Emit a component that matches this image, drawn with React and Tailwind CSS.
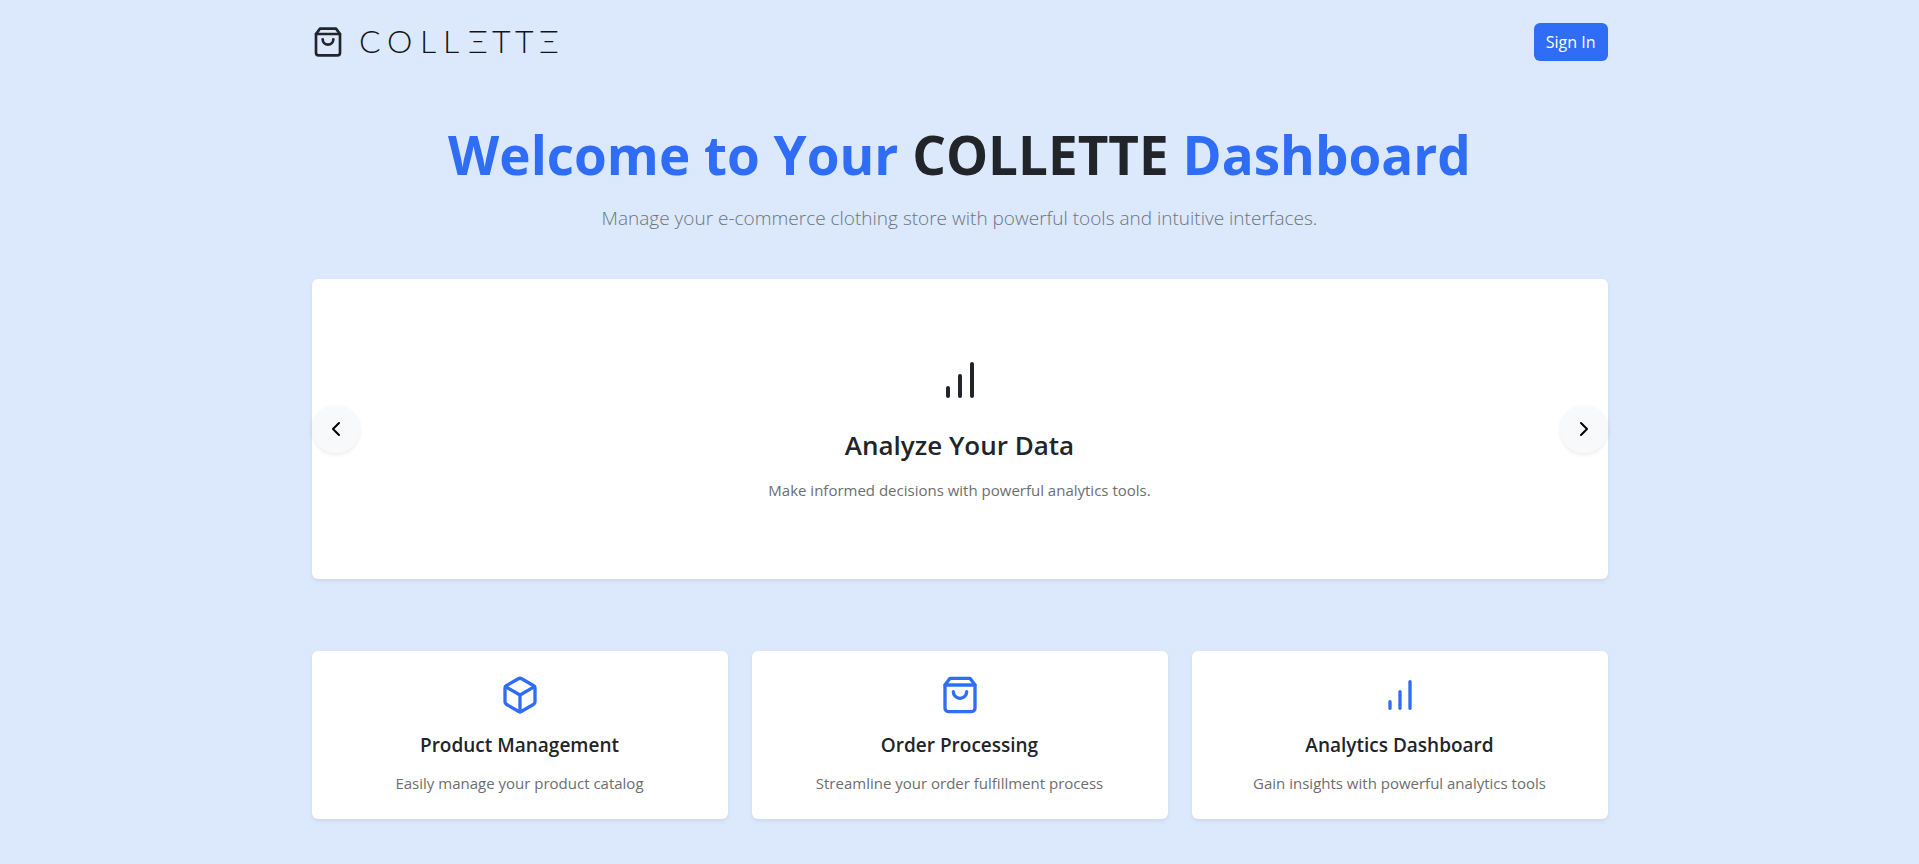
import { FiBarChart, FiBox, FiChevronLeft, FiChevronRight, FiShoppingBag } from "react-icons/fi";

const features = [
  { icon: FiBox, title: "Product Management", text: "Easily manage your product catalog" },
  { icon: FiShoppingBag, title: "Order Processing", text: "Streamline your order fulfillment process" },
  { icon: FiBarChart, title: "Analytics Dashboard", text: "Gain insights with powerful analytics tools" },
];

function Wordmark() {
  return (
    <svg width="210" height="40" viewBox="0 0 210 40" role="img" aria-label="Collette" className="overflow-visible font-[Lato,sans-serif] font-light">
      <text x="3 31 64 87 112 136 159 183" y="31" fontSize="32" fill="#111417">COLLΞTTΞ</text>
    </svg>
  );
}

function Header() {
  return (
    <header className="flex items-center justify-between pt-[22px] pb-5">
      <a href="#" className="flex items-center gap-3 text-[#212529]">
        <FiShoppingBag size={32} />
        <Wordmark />
      </a>
      <button type="button" className="h-[38px] rounded-md bg-[#2f6df6] px-3 text-base text-white">
        Sign In
      </button>
    </header>
  );
}

function Carousel() {
  const arrow =
    "absolute top-1/2 flex size-12 -translate-y-1/2 items-center justify-center rounded-full bg-[#f8f9fa] text-black shadow-[0_2px_4px_rgba(0,0,0,0.075)]";
  return (
    <section className="relative mt-[46px] flex min-h-[300px] flex-col items-center justify-center rounded-md bg-white text-center shadow-[0_2px_4px_rgba(0,0,0,0.075)]">
      <FiBarChart size={48} />
      <h2 className="mt-6 text-[26px] leading-[34px] font-semibold">Analyze Your Data</h2>
      <p className="mt-4 text-[15px] leading-6 text-[#6c6e70]">Make informed decisions with powerful analytics tools.</p>
      <button type="button" aria-label="Previous slide" className={`${arrow} left-0`}>
        <FiChevronLeft size={24} />
      </button>
      <button type="button" aria-label="Next slide" className={`${arrow} right-0`}>
        <FiChevronRight size={24} />
      </button>
    </section>
  );
}

function FeatureCard({ icon: Icon, title, text }) {
  return (
    <article className="flex flex-col items-center rounded-md bg-white p-6 text-center shadow-[0_2px_4px_rgba(0,0,0,0.075)]">
      <Icon size={40} className="text-[#2f6df6]" />
      <h3 className="mt-4 text-[19px] leading-7 font-semibold">{title}</h3>
      <p className="mt-3 text-[15px] leading-6 text-[#6c6e70]">{text}</p>
    </article>
  );
}

export default function App() {
  return (
    <div className="min-h-screen bg-[#dce8fc] font-['Open_Sans','Noto_Sans',sans-serif] text-[#212529]">
      <div className="mx-auto max-w-[1320px] px-3 pb-11">
        <Header />
        <main>
          <section className="pt-10 text-center">
            <h1 className="text-[53px] leading-[66px] font-bold text-[#2f6df6]">
              Welcome to Your <span className="text-[#212529]">COLLETTE</span> Dashboard
            </h1>
            <p className="mt-[15px] text-[19px] leading-[30px] font-light text-[#6c757d]">
              Manage your e-commerce clothing store with powerful tools and intuitive interfaces.
            </p>
          </section>
          <Carousel />
          <section className="mt-[72px] grid grid-cols-1 gap-6 md:grid-cols-3">
            {features.map((feature) => (
              <FeatureCard key={feature.title} {...feature} />
            ))}
          </section>
        </main>
      </div>
    </div>
  );
}
